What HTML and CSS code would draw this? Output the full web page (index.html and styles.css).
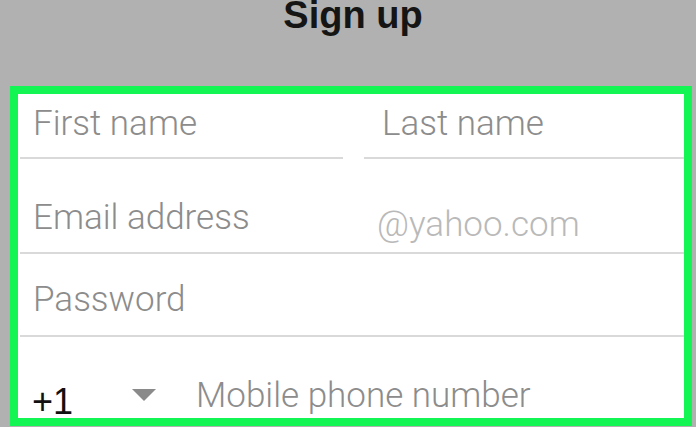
FILE: index.html
```html
<!DOCTYPE html>
<html lang="en">
<head>
  <meta charset="UTF-8">
  <meta name="viewport" content="width=device-width, initial-scale=1.0">
  <title>Sign up</title>

  <link rel="stylesheet" href="styles.css">
</head>

<body>
  <header class="top-bar">
    <h1 class="title">Sign up</h1>
  </header>

  <form class="signup-form">
    <div class="row name-row">
      <div class="field half">First name</div>
      <div class="field half second">Last name</div>
    </div>

    <div class="row email-row">
      <div class="field">Email address</div>
      <div class="domain">@yahoo.com</div>
    </div>

    <div class="row password-row">
      <div class="field">Password</div>
    </div>

    <div class="row phone-row">
      <div class="country-code">+1</div>
      <div class="caret"></div>
      <div class="field phone">Mobile phone number</div>
    </div>
  </form>
</body>
</html>
```

FILE: styles.css
```css
* {
  margin: 0;
  padding: 0;
  box-sizing: border-box;
}

body {
  height: 100vh;
  overflow: hidden;
  background-color: #b1b1b1;
  font-family: Roboto, 'Liberation Sans', sans-serif;
}

.top-bar {
  height: 86px;
  display: flex;
  justify-content: center;
  align-items: flex-start;
}

.title {
  font-family: 'Liberation Sans', Arial, sans-serif;
  font-size: 38px;
  font-weight: bold;
  line-height: 38px;
  color: #151515;
  margin-top: -4px;
  padding-left: 10px;
}

.signup-form {
  margin: 0 4px 0 10px;
  border: 8px solid #12f552;
  background-color: white;
  padding-left: 2px;
}

.row {
  display: flex;
  border-bottom: 2px solid #d9d9d9;
}

.field {
  font-size: 35px;
  font-weight: 300;
  line-height: 34px;
  color: #8c8c8c;
  padding-left: 13px;
}

/* first row has two split underlines */
.name-row {
  border-bottom: none;
  gap: 21px;
  height: 65px;
}

.half {
  width: 323px;
  padding-top: 13px;
  border-bottom: 2px solid #d9d9d9;
}

.half.second {
  flex: 1;
  padding-left: 18px;
}

.email-row {
  height: 95px;
  padding-top: 42px;
}

.email-row .field {
  width: 344px;
}

.domain {
  font-size: 35px;
  font-weight: 300;
  line-height: 34px;
  color: #b9b9b9;
  padding-top: 7px;
  padding-left: 13px;
}

.password-row {
  height: 83px;
  padding-top: 29px;
}

.phone-row {
  border-bottom: none;
  height: 81px;
  padding-top: 42px;
  align-items: flex-start;
}

.country-code {
  font-family: 'Liberation Sans', Arial, sans-serif;
  font-size: 36px;
  line-height: 34px;
  color: #111;
  padding-left: 12px;
  padding-top: 6px;
  width: 112px;
}

.caret {
  width: 0;
  height: 0;
  margin-top: 10px;
  border-left: 12px solid transparent;
  border-right: 12px solid transparent;
  border-top: 12px solid #8a8a8a;
}

.field.phone {
  padding-left: 40px;
}
```
